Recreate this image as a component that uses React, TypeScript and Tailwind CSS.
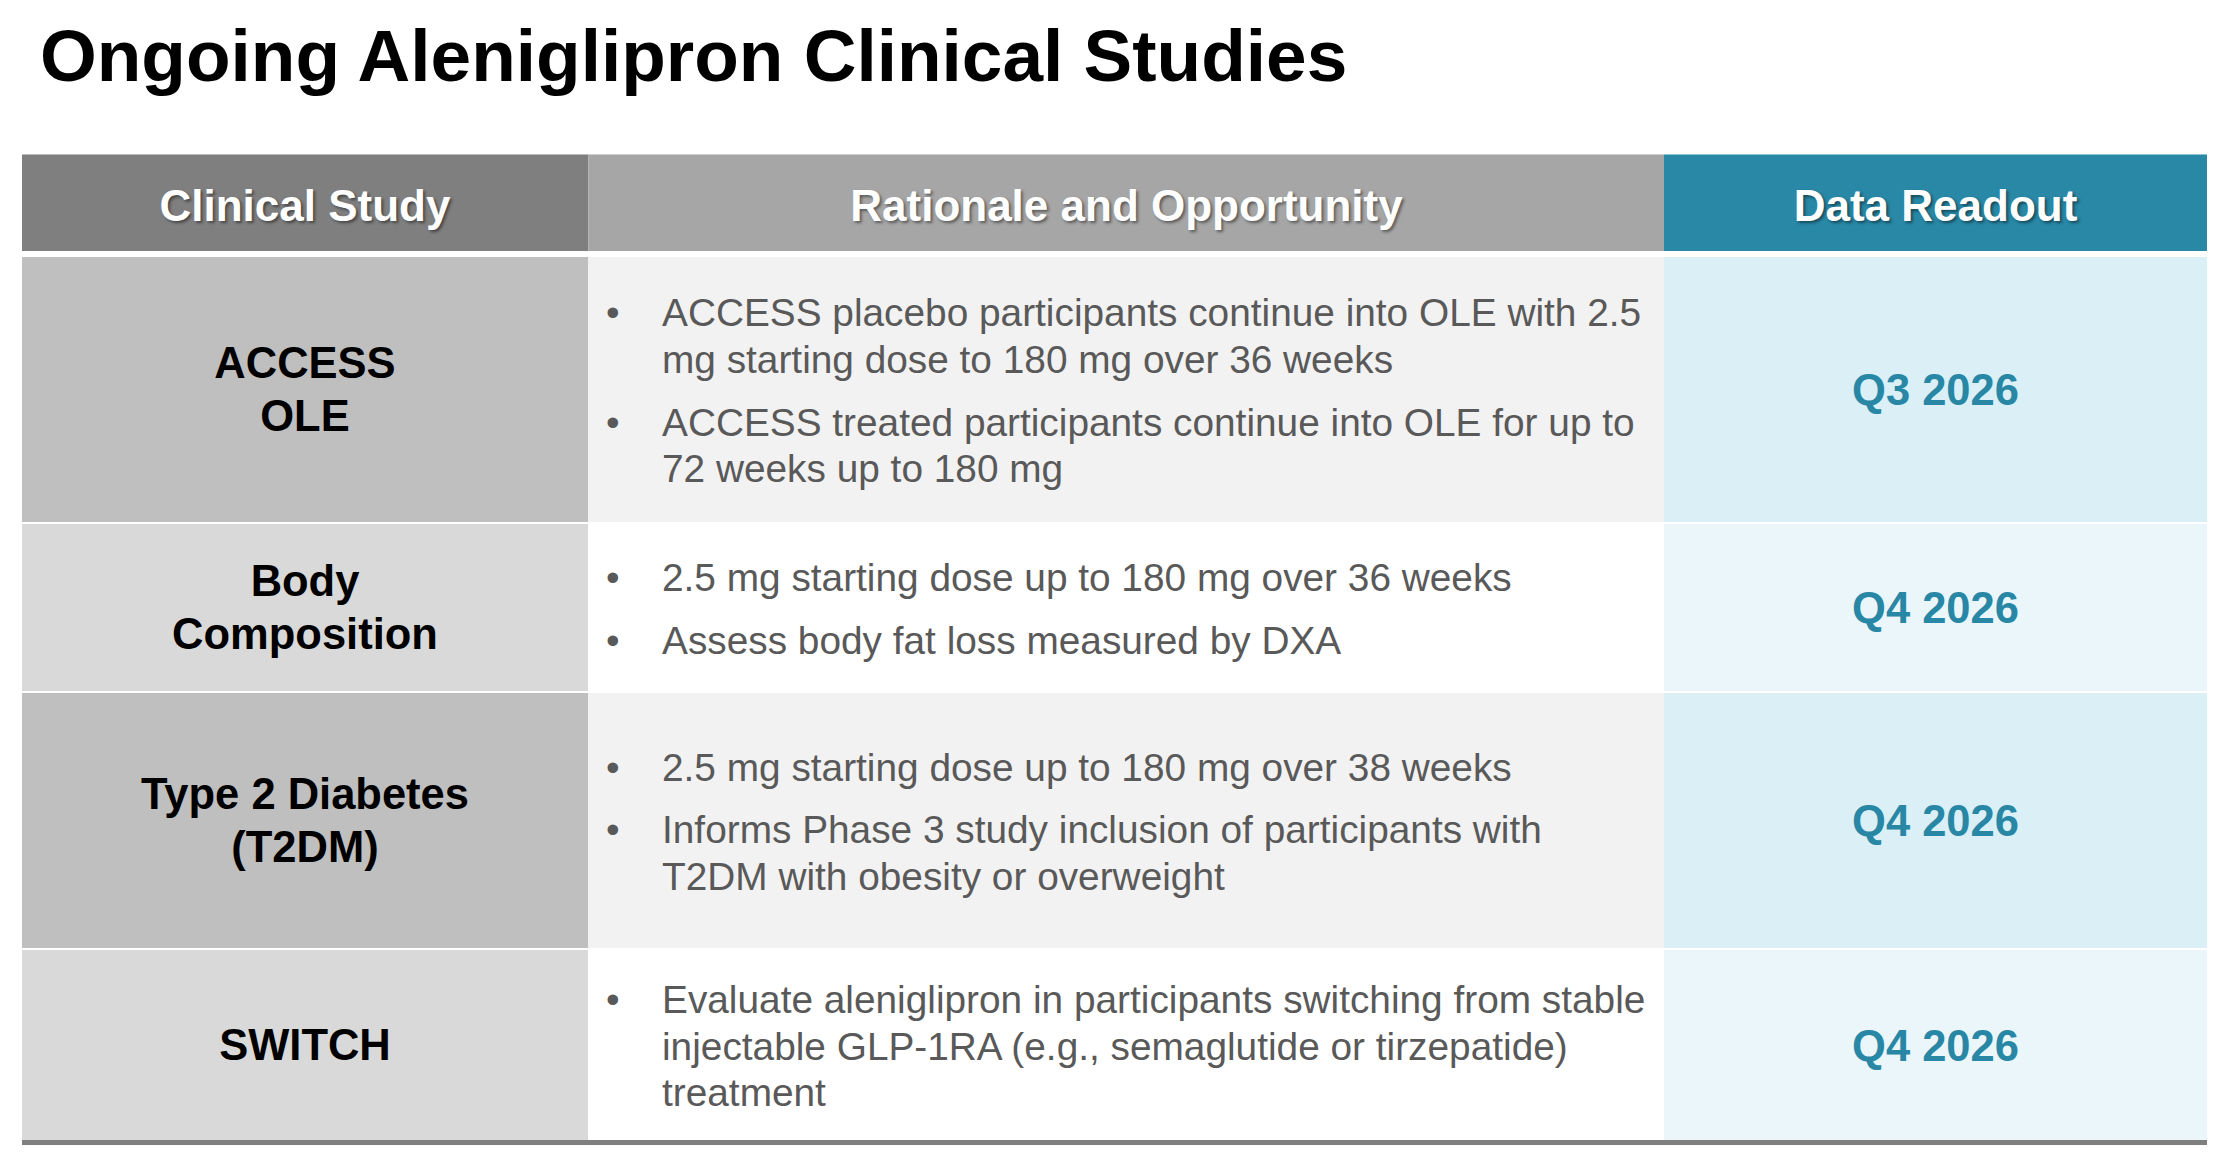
import React from "react";

const rows = [
  {
    study: ["ACCESS", "OLE"],
    points: [
      ["ACCESS placebo participants continue into OLE with 2.5", "mg starting dose to 180 mg over 36 weeks"],
      ["ACCESS treated participants continue into OLE for up to", "72 weeks up to 180 mg"],
    ],
    readout: "Q3 2026",
    height: "h-[265px]",
    dark: true,
  },
  {
    study: ["Body", "Composition"],
    points: [
      ["2.5 mg starting dose up to 180 mg over 36 weeks"],
      ["Assess body fat loss measured by DXA"],
    ],
    readout: "Q4 2026",
    height: "h-[167px]",
    dark: false,
  },
  {
    study: ["Type 2 Diabetes", "(T2DM)"],
    points: [
      ["2.5 mg starting dose up to 180 mg over 38 weeks"],
      ["Informs Phase 3 study inclusion of participants with", "T2DM with obesity or overweight"],
    ],
    readout: "Q4 2026",
    height: "h-[255px]",
    dark: true,
  },
  {
    study: ["SWITCH"],
    points: [
      [
        "Evaluate aleniglipron in participants switching from stable",
        "injectable GLP-1RA (e.g., semaglutide or tirzepatide)",
        "treatment",
      ],
    ],
    readout: "Q4 2026",
    height: "h-[190px]",
    dark: false,
  },
];

const App = () => {
  return (
    <div
      className="w-[2227px] h-[1163px] bg-white overflow-hidden"
      style={{ fontFamily: '"Liberation Sans", Arial, sans-serif' }}
    >
      <h1 className="mt-[19px] pl-[40px] text-[73px] leading-none font-bold text-black">
        Ongoing Aleniglipron Clinical Studies
      </h1>

      <div className="mt-[62px] ml-[22px] w-[2185px]">
        {/* header */}
        <div className="grid grid-cols-[566px_1076px_543px] h-[97px] text-white font-bold text-[44px] [text-shadow:2px_2px_3px_rgba(0,0,0,0.45)]">
          <div className="flex items-center justify-center pt-[5px] bg-[#7f7f7f] border-t border-[#bdbdbd]">
            Clinical Study
          </div>
          <div className="flex items-center justify-center pt-[5px] bg-[#a6a6a6] border-t border-[#cfcfcf] border-l border-l-[#b4b4b4]">
            Rationale and Opportunity
          </div>
          <div className="flex items-center justify-center pt-[5px] bg-[#2888a6] border-t border-[#8cc4d6]">
            Data Readout
          </div>
        </div>

        <div className="mt-[6px] flex flex-col gap-[2px]">
          {rows.map((row, i) => (
            <div
              key={i}
              className={`grid grid-cols-[566px_1076px_543px] ${row.height}`}
            >
              <div
                className={`flex flex-col items-center justify-center text-center text-black font-bold text-[43.5px] leading-[1.2] ${
                  row.dark ? "bg-[#bfbfbf]" : "bg-[#d9d9d9]"
                }`}
              >
                {row.study.map((line) => (
                  <div key={line}>{line}</div>
                ))}
              </div>
              <div
                className={`flex items-center pt-[4px] ${
                  row.dark ? "bg-[#f2f2f2]" : "bg-white"
                }`}
              >
                <ul className="w-full flex flex-col gap-4 text-[38.8px] leading-[1.2] text-[#595959]">
                  {row.points.map((p, j) => (
                    <li key={j} className="flex">
                      <span className="w-[74px] shrink-0 pl-[18px]">•</span>
                      <span className="flex-1 pr-[10px]">
                        {p.map((line) => (
                          <span key={line} className="block whitespace-nowrap">
                            {line}
                          </span>
                        ))}
                      </span>
                    </li>
                  ))}
                </ul>
              </div>
              <div
                className={`flex items-center justify-center pt-[3px] text-[43.5px] font-bold text-[#2887a5] ${
                  row.dark ? "bg-[#daeff6]" : "bg-[#ebf6fb]"
                }`}
              >
                {row.readout}
              </div>
            </div>
          ))}
        </div>
        <div className="h-[5px] bg-[#7f7f7f]" />
      </div>
    </div>
  );
};

export default App;
